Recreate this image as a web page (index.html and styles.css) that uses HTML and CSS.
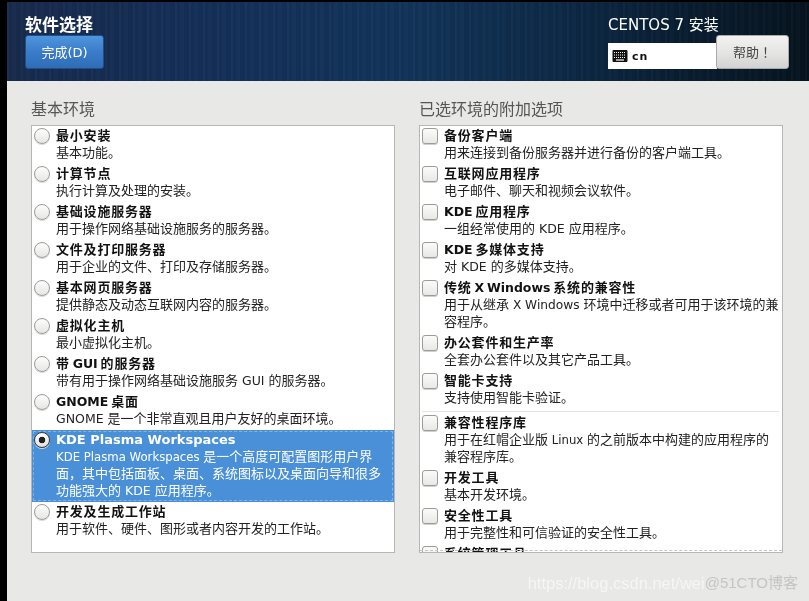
FILE: index.html
```html
<!DOCTYPE html>
<html lang="zh-CN">
<head>
<meta charset="utf-8">
<title>软件选择</title>
<link rel="stylesheet" href="styles.css">
</head>
<body>
<div class="screen">
  <header class="topbar">
    <div class="top-left">
      <h1 class="page-title">软件选择</h1>
      <button class="btn btn-done">完成(D)</button>
    </div>
    <div class="top-right">
      <div class="product">CENTOS 7 安装</div>
      <div class="top-controls">
        <div class="kbd">
          <svg class="kbd-icon" width="16" height="14" viewBox="0 0 16 14">
            <rect x="0.5" y="1" width="15" height="12" rx="1" fill="#111"/>
            <path d="M2 3.5h12M2 6h12M2 8.5h12" stroke="#fff" stroke-width="1" stroke-dasharray="1 1"/>
            <path d="M4 11h8" stroke="#fff" stroke-width="1.2"/>
          </svg>
          <span class="kbd-label">cn</span>
        </div>
        <button class="btn btn-help">帮助<span class="bang" lang="zh-TW">！</span></button>
      </div>
    </div>
  </header>
  <main class="content">
    <section class="col">
      <h2 class="col-title">基本环境</h2>
      <div class="list list-env">
        <div class="row"><span class="radio"></span><div class="txt"><div class="name">最小安装</div><div class="desc">基本功能。</div></div></div>
        <div class="row"><span class="radio"></span><div class="txt"><div class="name">计算节点</div><div class="desc">执行计算及处理的安装。</div></div></div>
        <div class="row"><span class="radio"></span><div class="txt"><div class="name">基础设施服务器</div><div class="desc">用于操作网络基础设施服务的服务器。</div></div></div>
        <div class="row"><span class="radio"></span><div class="txt"><div class="name">文件及打印服务器</div><div class="desc">用于企业的文件、打印及存储服务器。</div></div></div>
        <div class="row"><span class="radio"></span><div class="txt"><div class="name">基本网页服务器</div><div class="desc">提供静态及动态互联网内容的服务器。</div></div></div>
        <div class="row"><span class="radio"></span><div class="txt"><div class="name">虚拟化主机</div><div class="desc">最小虚拟化主机。</div></div></div>
        <div class="row"><span class="radio"></span><div class="txt"><div class="name">带<span class="lat"> GUI </span>的服务器</div><div class="desc">带有用于操作网络基础设施服务<span class="lat"> GUI </span>的服务器。</div></div></div>
        <div class="row"><span class="radio"></span><div class="txt"><div class="name"><span class="lat">GNOME </span>桌面</div><div class="desc"><span class="lat">GNOME </span>是一个非常直观且用户友好的桌面环境。</div></div></div>
        <div class="row selected"><span class="radio checked"></span><div class="txt"><div class="name"><span class="lat-full">KDE Plasma Workspaces</span></div><div class="desc"><span class="lat-n">KDE Plasma Workspaces </span>是一个高度可配置图形用户界面，其中包括面板、桌面、系统图标以及桌面向导和很多功能强大的<span class="lat"> KDE </span>应用程序。</div></div></div>
        <div class="row"><span class="radio"></span><div class="txt"><div class="name">开发及生成工作站</div><div class="desc">用于软件、硬件、图形或者内容开发的工作站。</div></div></div>
      </div>
    </section>
    <section class="col">
      <h2 class="col-title">已选环境的附加选项</h2>
      <div class="list list-addons">
        <div class="row"><span class="check"></span><div class="txt"><div class="name">备份客户端</div><div class="desc">用来连接到备份服务器并进行备份的客户端工具。</div></div></div>
        <div class="row"><span class="check"></span><div class="txt"><div class="name">互联网应用程序</div><div class="desc">电子邮件、聊天和视频会议软件。</div></div></div>
        <div class="row"><span class="check"></span><div class="txt"><div class="name"><span class="lat">KDE </span>应用程序</div><div class="desc">一组经常使用的<span class="lat"> KDE </span>应用程序。</div></div></div>
        <div class="row"><span class="check"></span><div class="txt"><div class="name"><span class="lat">KDE </span>多媒体支持</div><div class="desc">对<span class="lat"> KDE </span>的多媒体支持。</div></div></div>
        <div class="row"><span class="check"></span><div class="txt"><div class="name">传统<span class="lat"> X Windows </span>系统的兼容性</div><div class="desc">用于从继承<span class="lat-w"> X Windows </span>环境中迁移或者可用于该环境的兼容程序。</div></div></div>
        <div class="row"><span class="check"></span><div class="txt"><div class="name">办公套件和生产率</div><div class="desc">全套办公套件以及其它产品工具。</div></div></div>
        <div class="row"><span class="check"></span><div class="txt"><div class="name">智能卡支持</div><div class="desc">支持使用智能卡验证。</div></div></div>
        <div class="sep"></div>
        <div class="row"><span class="check"></span><div class="txt"><div class="name">兼容性程序库</div><div class="desc">用于在红帽企业版<span class="lat-n"> Linux </span>的之前版本中构建的应用程序的兼容程序库。</div></div></div>
        <div class="row"><span class="check"></span><div class="txt"><div class="name">开发工具</div><div class="desc">基本开发环境。</div></div></div>
        <div class="row"><span class="check"></span><div class="txt"><div class="name">安全性工具</div><div class="desc">用于完整性和可信验证的安全性工具。</div></div></div>
        <div class="row"><span class="check"></span><div class="txt"><div class="name">系统管理工具</div><div class="desc">用于系统管理的工具。</div></div></div>
        <div class="fade-line"></div>
      </div>
    </section>
  </main>
  <div class="watermark"><span class="wm-a">https://blog.csdn.net/wei</span><span class="wm-b">@51CTO博客</span></div>
</div>
</body>
</html>
```
FILE: styles.css
```css
* { box-sizing: border-box; }
html, body { margin: 0; height: 100%; background: #000; overflow: hidden; }
body {
  font-family: "DejaVu Sans", "Noto Sans CJK SC", sans-serif;
  font-size: 13px;
  color: #2e3436;
}
.screen {
  position: relative;
  margin: 2px 0 0 7px;
  height: 599px;
  display: flex;
  flex-direction: column;
  background: #e8e8e6;
  filter: blur(0.3px);
}
.topbar {
  height: 79px;
  flex: none;
  display: flex;
  justify-content: space-between;
  padding: 12px 20px 0 18px;
  background:
    repeating-linear-gradient(90deg, rgba(255,255,255,.025) 0 2px, rgba(0,0,0,.03) 2px 5px, rgba(255,255,255,.01) 5px 9px, rgba(0,0,0,.035) 9px 14px),
    linear-gradient(90deg, #172b4d 0%, #14305a 30%, #123459 50%, #0d2a48 68%, #091d30 85%, #06141f 100%);
}
.page-title {
  margin: 0;
  padding-top: 1px;
  font-size: 17px;
  line-height: 20px;
  font-weight: bold;
  color: #fff;
}
.btn {
  font-family: inherit;
  font-size: 13px;
  height: 34px;
  border-radius: 3px;
  padding: 0 0 2px;
}
.btn-done {
  display: block;
  width: 79px;
  color: #fff;
  border: 1px solid #1f4f8a;
  background: linear-gradient(#4f96de, #3a7cc9 50%, #2f6db6);
}
.top-right { width: 181px; }
.product {
  height: 21px;
  padding-top: 1px;
  font-size: 15px;
  line-height: 20px;
  color: #fff;
}
.top-controls { display: flex; align-items: flex-end; }
.kbd {
  width: 109px;
  height: 26px;
  margin-right: -1px;
  display: flex;
  align-items: center;
  gap: 4px;
  padding-left: 4px;
  background: #fff;
}
.kbd-label { font-size: 11px; font-weight: bold; color: #111; letter-spacing: 1px; }
.btn-help {
  width: 73px;
  color: #444;
  border: 1px solid #aaa;
  background: linear-gradient(#f2f2f0, #e4e4e2 55%, #d2d2d0);
}
.bang { font-family: "Noto Sans CJK TC", sans-serif; }
.content {
  flex: 1;
  display: flex;
  gap: 24px;
  padding: 0 0 0 24px;
}
.col { width: 364px; }
.col-title {
  margin: 19px 0 5px;
  font-size: 16px;
  line-height: 20px;
  font-weight: normal;
  color: #555753;
}
.list {
  position: relative;
  height: 428px;
  overflow: hidden;
  border: 1px solid #b6b6b3;
  background: #fff;
}
.row {
  display: flex;
  padding: 1px 2px 3px;
  line-height: 17px;
}
.txt { flex: 1; min-width: 0; }
.list-env .txt { padding-right: 9px; }
.name, .desc { height: auto; }
.name { font-weight: bold; color: #111; letter-spacing: .8px; }
.desc { color: #222; }
.lat, .lat-n, .lat-w, .lat-full { line-height: 1; }
.name .lat { font-size: 12.5px; letter-spacing: 0; word-spacing: -1.5px; }
.name .lat-full { letter-spacing: 0; }
.desc .lat { font-size: 12.5px; }
.desc .lat-n { font-size: 11.7px; }
.desc .lat-w { font-size: 12.2px; }
.radio {
  flex: none;
  width: 16px;
  height: 16px;
  margin: 1px 6px 0 0;
  border-radius: 50%;
  border: 1px solid #9b9b98;
  background: linear-gradient(#fdfdfd, #e6e6e4);
  box-shadow: 0 1px 0 #d8d8d6;
  display: block;
}
.radio.checked {
  border-color: #3c3c3c;
  background: radial-gradient(circle, #222 0 3px, transparent 3.6px), linear-gradient(#fff, #e0e0de);
}
.selected {
  position: relative;
  background: #4a90d9;
  outline: 1px dashed rgba(255,255,255,.3);
  outline-offset: -2px;
}
.selected .name, .selected .desc { color: #fff; }
.check {
  flex: none;
  width: 16px;
  height: 16px;
  margin: 1px 6px 0 0;
  border-radius: 3px;
  border: 1px solid #9b9b98;
  background: linear-gradient(#fbfbfb, #e8e8e6);
  box-shadow: 0 1px 0 #d0d0ce;
}
.sep { height: 1px; margin: 2px 3px 1px 2px; background: #e4e4e2; }
.fade-line {
  position: absolute;
  left: 0;
  right: 0;
  bottom: 1px;
  border-bottom: 1px dashed #c4c4c2;
}
.watermark {
  position: absolute;
  right: 11px;
  bottom: 8px;
  font-family: "Liberation Sans", "Noto Sans CJK SC", sans-serif;
  font-size: 16.5px;
  line-height: 20px;
  color: rgba(255,255,255,.6);
  display: flex;
}
.wm-b { color: rgba(190,190,190,.85); font-size: 15px; }
```
